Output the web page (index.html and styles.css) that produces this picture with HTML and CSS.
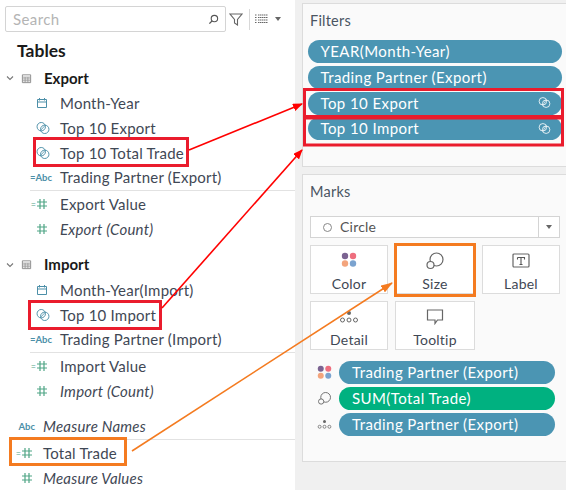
FILE: index.html
```html
<!DOCTYPE html>
<html lang="en">
<head>
<meta charset="utf-8">
<title>Tableau data pane</title>
<link rel="stylesheet" href="styles.css">
</head>
<body>
<svg class="defs" width="0" height="0" aria-hidden="true">
  <symbol id="i-set" viewBox="0 0 16 16"><circle cx="6" cy="6.500" r="4.800" fill="none" stroke="#4c8fa8" stroke-width="1.100"/><circle cx="10" cy="9.500" r="4.800" fill="none" stroke="#4c8fa8" stroke-width="1.100"/><path d="M5 11 10.500 5" stroke="#4c8fa8" stroke-width=".9"/></symbol>
  <symbol id="i-set-w" viewBox="0 0 16 16"><circle cx="6" cy="6.500" r="4.600" fill="none" stroke="#fff" stroke-width="1"/><circle cx="10" cy="9.500" r="4.600" fill="none" stroke="#fff" stroke-width="1"/><path d="M6 11 10 5" stroke="#fff" stroke-width=".8"/></symbol>
  <symbol id="i-cal" viewBox="0 0 12 12"><path d="M1.500 2.500h9v8h-9zM1.500 5h9M3.500 1v2.500M8.500 1v2.500" fill="none" stroke="#4c8fa8" stroke-width="1"/></symbol>
  <symbol id="i-hash" viewBox="0 0 12 12"><path d="M4 1v10M8 1v10M1 4h10M1 8h10" stroke="#4fa585" stroke-width="1.200" fill="none"/></symbol>
  <symbol id="i-table" viewBox="0 0 12 12"><path d="M1.500 2h9v8.500h-9z" fill="none" stroke="#888" stroke-width="1"/><path d="M1.500 4.500h9M1.500 6.500h9M1.500 8.500h9M4.500 4.500v6M7.500 4.500v6" stroke="#999" stroke-width="1"/></symbol>
  <symbol id="i-chev" viewBox="0 0 8 6"><path d="M1 1.500 4 4.500 7 1.500" fill="none" stroke="#777" stroke-width="1.100"/></symbol>
  <symbol id="i-size" viewBox="0 0 20 20"><circle cx="11.500" cy="8.500" r="6.500" fill="none" stroke="#666" stroke-width="1.200"/><circle cx="5.500" cy="14" r="3.500" fill="#fafafa" stroke="#666" stroke-width="1.200"/></symbol>
  <symbol id="i-color" viewBox="0 0 18 18"><circle cx="4.500" cy="4.500" r="3.600" fill="#7b6391"/><circle cx="13.500" cy="4.500" r="3.600" fill="#ee6e7e"/><circle cx="4.500" cy="13" r="3.600" fill="#f3a47c"/><circle cx="13.500" cy="13" r="3.600" fill="#7ba3cf"/></symbol>
  <symbol id="i-detail" viewBox="0 0 20 14"><circle cx="10" cy="3" r="2" fill="#666"/><g fill="none" stroke="#666"><circle cx="3.500" cy="10" r="2"/><circle cx="10" cy="10" r="2"/><circle cx="16.500" cy="10" r="2"/></g></symbol>
</svg>

<main class="app">
  <section class="data-pane">
    <div class="toolbar">
      <div class="search">
        <span class="search-text">Search</span>
        <svg class="search-icon" viewBox="0 0 12 12"><circle cx="7" cy="5" r="3.500" fill="none" stroke="#555" stroke-width="1.200"/><path d="M4.500 7.500 1.500 10.500" stroke="#555" stroke-width="1.500"/></svg>
      </div>
      <svg class="funnel" viewBox="0 0 14 14"><path d="M1 2h12L8.500 7.500V13L5.500 11V7.500z" fill="none" stroke="#666" stroke-width="1.100"/></svg>
      <span class="tool-sep"></span>
      <svg class="list-icon" viewBox="0 0 13 10"><path d="M0 1h2M3 1h10M0 3.500h2M3 3.500h10M0 6h2M3 6h10M0 8.500h2M3 8.500h10" stroke="#666" stroke-width="1.200" stroke-dasharray="1.500 .5"/></svg>
      <span class="caret"></span>
    </div>

    <h2 class="tables-title">Tables</h2>

    <div class="table-head">
      <svg class="chev"><use href="#i-chev"/></svg>
      <svg class="table-icon"><use href="#i-table"/></svg>
      <strong>Export</strong>
    </div>
    <ul class="fields">
      <li class="row"><span class="ico"><svg class="ic12"><use href="#i-cal"/></svg></span>Month-Year</li>
      <li class="row"><span class="ico"><svg class="ic14"><use href="#i-set"/></svg></span>Top 10 Export</li>
      <li class="row"><span class="ico"><svg class="ic14"><use href="#i-set"/></svg></span>Top 10 Total Trade</li>
      <li class="row rule"><span class="ico abc"><i>=</i>Abc</span>Trading Partner (Export)</li>
      <li class="row"><span class="ico"><i class="eq">=</i><svg class="ic12"><use href="#i-hash"/></svg></span>Export Value</li>
      <li class="row em"><span class="ico"><svg class="ic12"><use href="#i-hash"/></svg></span>Export (Count)</li>
    </ul>

    <div class="table-head second">
      <svg class="chev"><use href="#i-chev"/></svg>
      <svg class="table-icon"><use href="#i-table"/></svg>
      <strong>Import</strong>
    </div>
    <ul class="fields">
      <li class="row"><span class="ico"><svg class="ic12"><use href="#i-cal"/></svg></span>Month-Year(Import)</li>
      <li class="row"><span class="ico"><svg class="ic14"><use href="#i-set"/></svg></span>Top 10 Import</li>
      <li class="row rule"><span class="ico abc"><i>=</i>Abc</span>Trading Partner (Import)</li>
      <li class="row"><span class="ico"><i class="eq">=</i><svg class="ic12"><use href="#i-hash"/></svg></span>Import Value</li>
      <li class="row em"><span class="ico"><svg class="ic12"><use href="#i-hash"/></svg></span>Import (Count)</li>
    </ul>

    <ul class="fields measures">
      <li class="row em rule"><span class="ico abc">Abc</span>Measure Names</li>
      <li class="row"><span class="ico"><i class="eq">=</i><svg class="ic12"><use href="#i-hash"/></svg></span>Total Trade</li>
      <li class="row em"><span class="ico"><svg class="ic12"><use href="#i-hash"/></svg></span>Measure Values</li>
    </ul>
  </section>

  <section class="shelves">
    <div class="card filters">
      <h3 class="card-title">Filters</h3>
      <div class="pill">YEAR(Month-Year)</div>
      <div class="pill">Trading Partner (Export)</div>
      <div class="pill">Top 10 Export<svg class="pill-icon"><use href="#i-set-w"/></svg></div>
      <div class="pill">Top 10 Import<svg class="pill-icon"><use href="#i-set-w"/></svg></div>
    </div>

    <div class="card marks">
      <h3 class="card-title">Marks</h3>
      <div class="dropdown">
        <span class="dd-label"><span class="dd-circle"></span>Circle</span>
        <span class="dd-btn"><span class="caret"></span></span>
      </div>
      <div class="mark-grid">
        <div class="mark-btn"><svg class="m-color"><use href="#i-color"/></svg><span>Color</span></div>
        <div class="mark-btn"><svg class="m-size"><use href="#i-size"/></svg><span>Size</span></div>
        <div class="mark-btn">
          <svg class="m-label" viewBox="0 0 18 16"><rect x="1" y="1" width="16" height="13" rx="1" fill="none" stroke="#666" stroke-width="1.200"/><path d="M5.500 4.500h7v2M9 4.500v7M7.500 11.500h3M5.500 4.500v2" fill="none" stroke="#555" stroke-width="1.100"/></svg>
          <span>Label</span>
        </div>
        <div class="mark-btn"><svg class="m-detail"><use href="#i-detail"/></svg><span>Detail</span></div>
        <div class="mark-btn">
          <svg class="m-tip" viewBox="0 0 18 16"><path d="M1.500 1h15v10h-5l-2.500 3.500V11h-7.500z" fill="none" stroke="#666" stroke-width="1.200"/></svg>
          <span>Tooltip</span>
        </div>
      </div>
      <div class="enc"><svg class="enc-color"><use href="#i-color"/></svg><div class="pill">Trading Partner (Export)</div></div>
      <div class="enc"><svg class="enc-size"><use href="#i-size"/></svg><div class="pill green">SUM(Total Trade)</div></div>
      <div class="enc"><svg class="enc-detail"><use href="#i-detail"/></svg><div class="pill">Trading Partner (Export)</div></div>
    </div>
  </section>

  <svg class="notes" viewBox="0 0 571 495" aria-hidden="true">
    <defs>
      <marker id="ah-red" markerWidth="10" markerHeight="8" refX="9" refY="4" orient="auto" markerUnits="userSpaceOnUse"><path d="M0 0 10 4 0 8z" fill="#f00"/></marker>
      <marker id="ah-org" markerWidth="12" markerHeight="8" refX="11" refY="4" orient="auto" markerUnits="userSpaceOnUse"><path d="M0 0 12 4 0 8z" fill="#f47b20"/></marker>
    </defs>
    <g fill="none" stroke="#ea1c2d" stroke-width="3">
      <rect x="34.500" y="138.500" width="153" height="27"/>
      <rect x="29.500" y="301.500" width="131" height="27"/>
      <rect x="304.500" y="89.500" width="258" height="27"/>
      <rect x="304.500" y="118" width="258" height="27"/>
    </g>
    <g fill="none" stroke="#f47b20" stroke-width="3">
      <rect x="10.500" y="438.500" width="115" height="26"/>
      <rect x="395.500" y="244.500" width="79" height="51"/>
    </g>
    <path d="M189 150 302 104" stroke="#f00" stroke-width="1.600" marker-end="url(#ah-red)"/>
    <path d="M162 308 302 150" stroke="#f00" stroke-width="1.600" marker-end="url(#ah-red)"/>
    <path d="M132 451 392 283" stroke="#f47b20" stroke-width="1.600" marker-end="url(#ah-org)"/>
  </svg>
</main>
</body>
</html>
```
FILE: styles.css
```css
* { box-sizing: border-box; }
html, body { margin: 0; padding: 0; background: #fff; }
body { font-family: "Lato", "Open Sans", sans-serif; color: #3f4855; font-size: 15px; letter-spacing: .22px; width: 571px; height: 495px; overflow: hidden; }
.defs { position: absolute; }
svg { display: block; }
h2, h3, ul { margin: 0; padding: 0; list-style: none; font-weight: normal; }

.app { position: relative; display: flex; width: 571px; height: 495px; }

/* data pane */
.data-pane { width: 295px; height: 100%; padding-top: 6px; }
.toolbar { display: flex; align-items: center; height: 26px; padding-left: 5px; }
.search { display: flex; align-items: center; justify-content: space-between; width: 221px; height: 26px; padding: 0 6px 0 7px; border: 1px solid #d4d4d4; border-radius: 2px; }
.search-text { font-size: 15px; letter-spacing: .4px; color: #b4b4b4; }
.search-icon { width: 11px; height: 11px; }
.funnel { width: 14px; height: 14px; margin-left: 3px; }
.tool-sep { width: 1px; height: 21px; margin: 0 5px 0 6px; background: #d8d8d8; }
.list-icon { width: 13px; height: 10px; }
.caret { display: block; width: 0; height: 0; margin-left: 7px; border: 3.500px solid transparent; border-top: 4px solid #666; border-bottom: 0; }

.tables-title { margin: 7px 0 0 17px; height: 24px; line-height: 24px; font-size: 17.500px; letter-spacing: 0; font-weight: 700; color: #1a1a1a; }
.table-head { display: flex; align-items: center; height: 26px; margin-top: 2px; }
.table-head + .fields { padding-top: .7px; }
.table-head.second { margin-top: 9.700px; }
.table-head strong { font-size: 15px; letter-spacing: 0; color: #1a1a1a; font-weight: 700; margin-left: 11px; padding-bottom: 1px; }
.chev { width: 8px; height: 6px; margin-left: 6px; }
.table-icon { width: 11px; height: 11px; margin-left: 7px; margin-right: 1px; }

.fields { margin-left: 30px; }
.row { position: relative; display: flex; align-items: center; height: 24.600px; padding-bottom: 1px; white-space: nowrap; }
.row.em { font-style: italic; }
.row.rule::after { content: ""; position: absolute; left: 0; right: 0; bottom: -1px; height: 1px; background: #e2e2e2; }
.row.rule + .row { margin-top: 2.600px; }
.ico { display: flex; align-items: center; justify-content: flex-end; width: 20px; margin-right: 10px; flex: none; color: #4c8fa8; letter-spacing: 0; }
.ic12 { width: 12px; height: 12px; margin-right: 2px; }
.ic14 { width: 14px; height: 14px; }
.abc { font-size: 9.500px; font-weight: 700; width: 22px; margin-right: 8px; font-style: normal; }
.abc i { font-style: normal; }
.eq { font-style: normal; font-size: 9px; color: #4fa585; line-height: 1; }

.measures { margin-left: 13px; margin-top: 10.700px; }
.measures .ico { width: 22px; margin-right: 8px; }

/* right side */
.shelves { width: 271px; height: 490px; background: #f0f0f0; padding: 3px 0 0 7px; }
.card { background: #fafafa; border: 1px solid #dcdcdc; border-right: 0; width: 264px; padding: 0 4px 0 5px; }
.filters { height: 164px; }
.marks { height: 288px; margin-top: 7px; padding: 0 6px 0 7px; }
.card-title { height: 34px; line-height: 34px; font-size: 14.500px; color: #4a5562; }
.filters .card-title { margin-left: 2px; }
.pill { display: flex; align-items: center; justify-content: space-between; height: 23px; margin-bottom: 2.800px; padding: 0 11px 1px 13px; border-radius: 12px; background: #4b95b3; color: #fff; font-size: 15px; letter-spacing: .42px; white-space: nowrap; }
.filters .pill { padding-left: 12.500px; }
.filters .card-title + .pill { margin-top: 2px; }
.pill.green { background: #00b180; }
.pill-icon { width: 13px; height: 13px; }

.dropdown { display: flex; height: 22px; margin-top: 7px; background: #fff; border: 1px solid #d4d4d4; }
.dd-label { flex: 1; display: flex; align-items: center; font-size: 14px; color: #555; padding: 0 0 2px 12px; }
.dd-circle { width: 9px; height: 9px; margin: 2px 8px 0 0; border: 1px solid #888; border-radius: 50%; }
.dd-btn { display: flex; align-items: center; justify-content: center; width: 21px; border-left: 1px solid #d4d4d4; }
.dd-btn .caret { margin: 0; }

.mark-grid { display: grid; grid-template-columns: 78px 80px 78px; column-gap: 7px; row-gap: 7px; margin-top: 7px; margin-bottom: 9px; }
.mark-btn { display: flex; flex-direction: column; align-items: center; justify-content: flex-end; height: 49px; background: #fff; border: 1px solid #dcdcdc; font-size: 14px; color: #3f4855; padding-bottom: 0; }
.mark-btn span { line-height: 18px; }
.m-color { width: 16px; height: 16px; margin-bottom: 7px; }
.m-size { width: 20px; height: 20px; margin-bottom: 4px; }
.m-label { width: 18px; height: 16px; margin-bottom: 6px; }
.m-detail { width: 20px; height: 14px; margin-bottom: 7px; }
.m-tip { width: 18px; height: 16px; margin-bottom: 6px; }

.enc { display: flex; align-items: center; height: 26px; padding: 0 5px 0 7px; }
.enc .pill { flex: 1; margin-bottom: 0; margin-left: 7px; }
.enc-color { width: 15px; height: 15px; }
.enc-size { width: 15px; height: 15px; }
.enc-detail { width: 15px; height: 11px; }

/* annotations drawn over the screenshot */
.notes { position: absolute; left: 0; top: 0; width: 571px; height: 495px; pointer-events: none; }
```
